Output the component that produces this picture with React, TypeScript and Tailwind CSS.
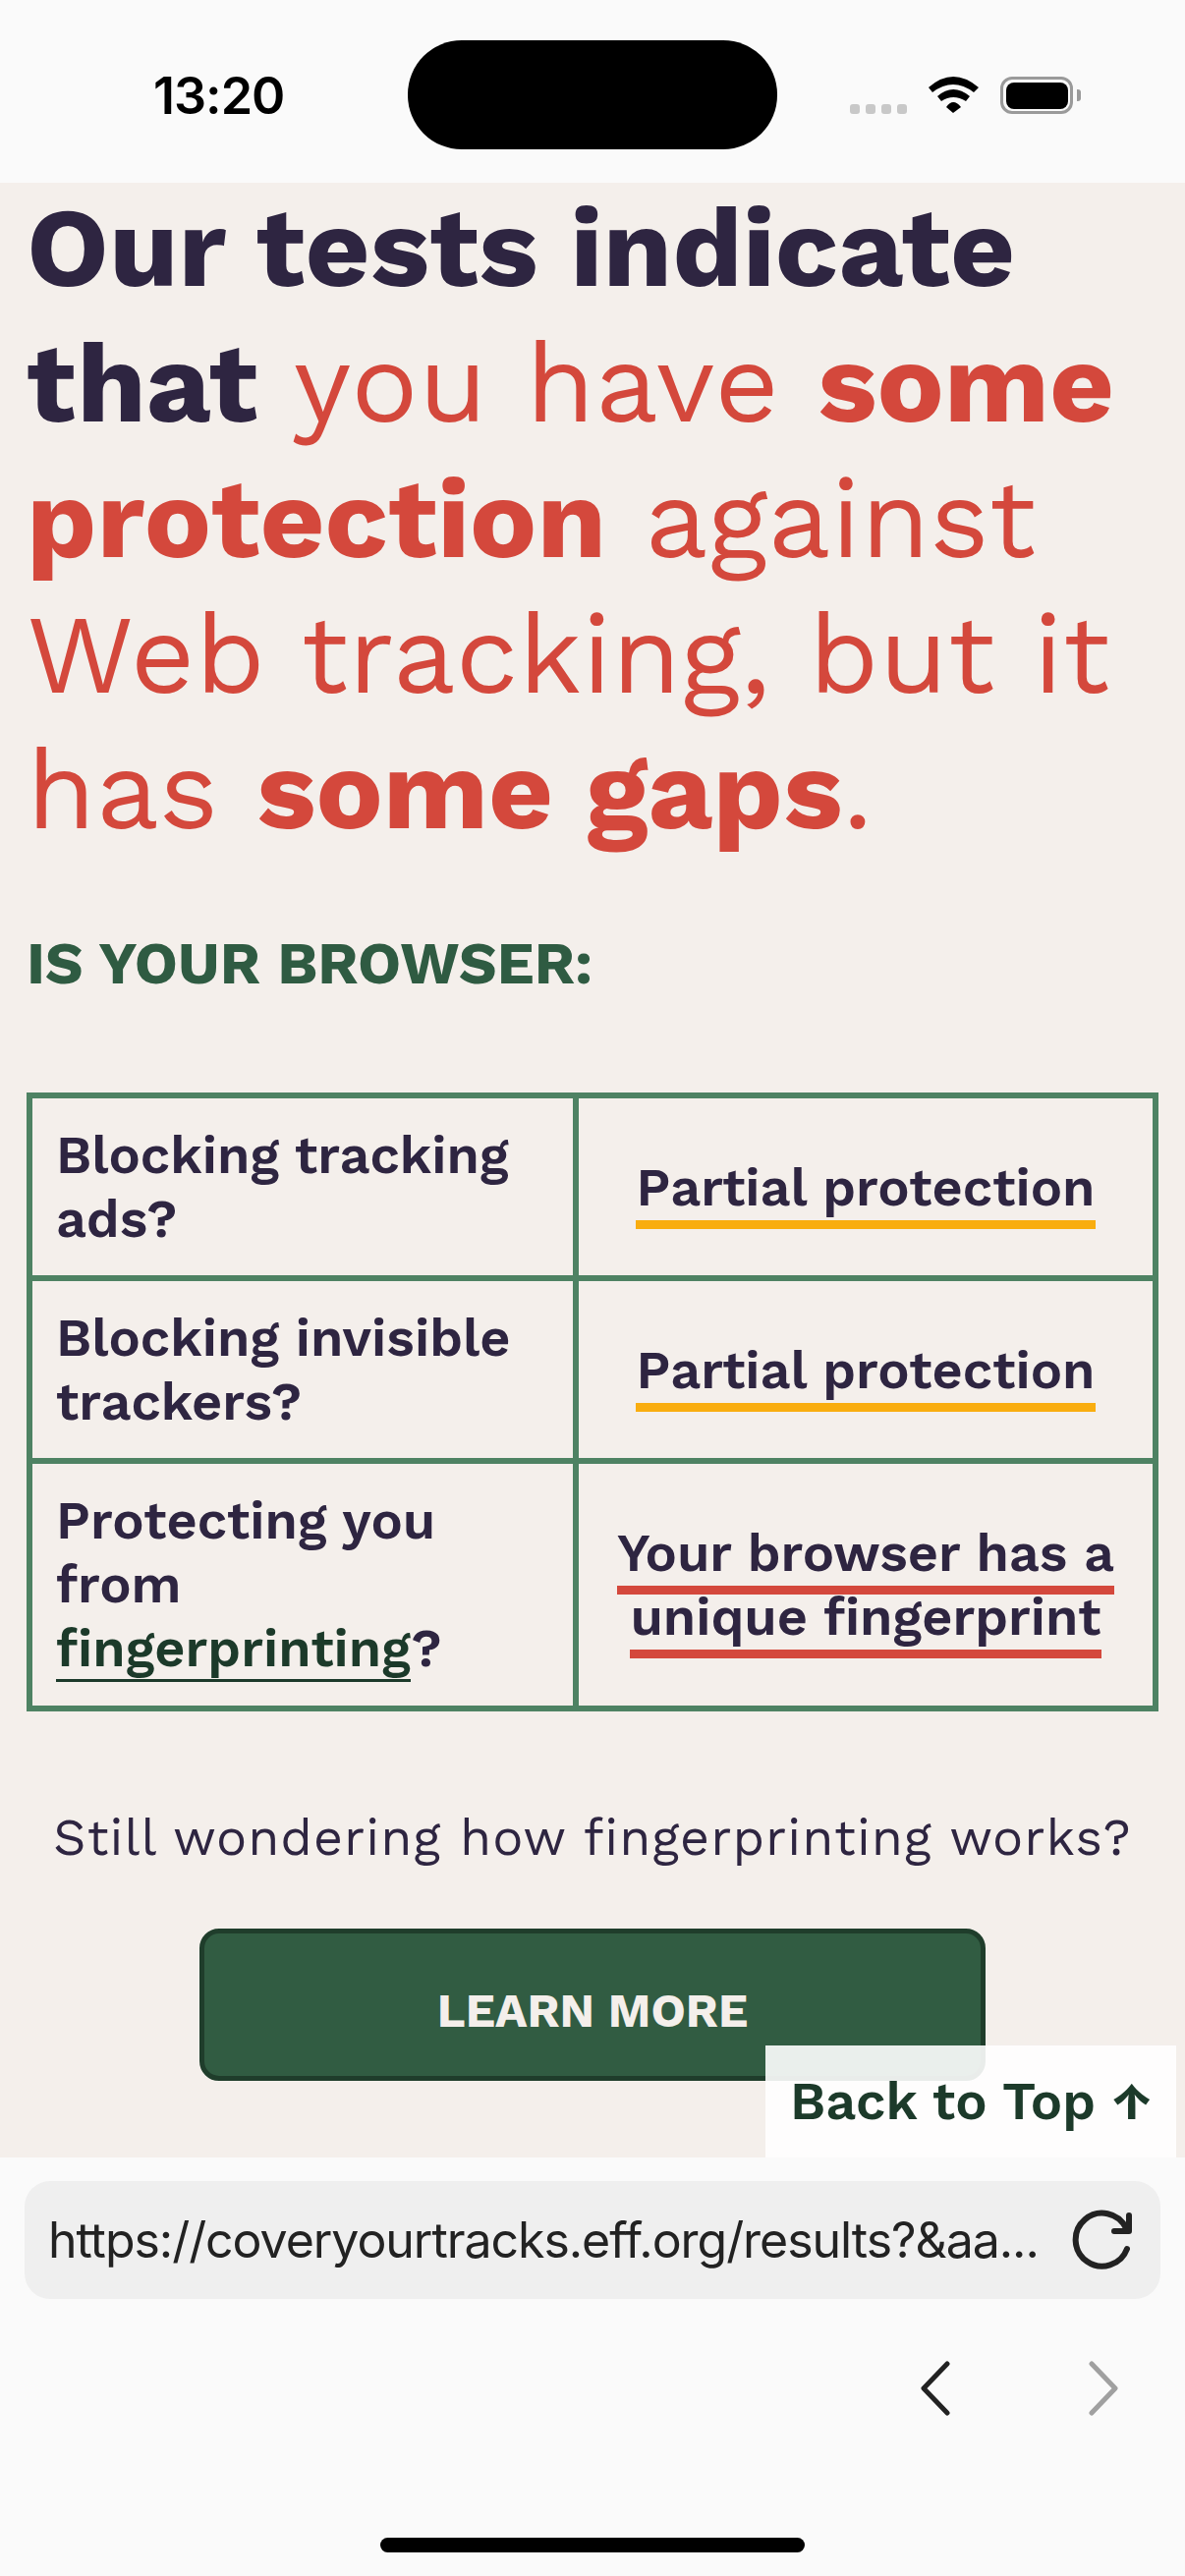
import { ReactNode } from 'react';

const UI_FONT = 'font-["Work_Sans","Inter","Liberation_Sans",sans-serif]';

function Underlined({ color, children }: { color: string; children: ReactNode }) {
  return <span className={`border-b-[9px] pb-[2px] ${color}`}>{children}</span>;
}

function StatusBar() {
  return (
    <div className="relative flex h-[186px] items-center bg-[#fafafa]">
      <span className="absolute left-[156px] top-[68px] font-['Inter',sans-serif] text-[52px] leading-[60px] font-semibold tracking-[-1px] text-black">
        13:20
      </span>
      <div className="absolute left-[415px] top-[41px] h-[111px] w-[376px] rounded-[55px] bg-black" />
      {/* signal dots */}
      <div className="absolute left-[865px] top-[106px] flex gap-[6px]">
        <span className="h-[10px] w-[10px] rounded-[3px] bg-[#c8c8c8]" />
        <span className="h-[10px] w-[10px] rounded-[3px] bg-[#c8c8c8]" />
        <span className="h-[10px] w-[10px] rounded-[3px] bg-[#c8c8c8]" />
        <span className="h-[10px] w-[10px] rounded-[3px] bg-[#c8c8c8]" />
      </div>
      <svg className="absolute left-[945px] top-[78px]" width="52" height="38" viewBox="0 0 52 38" fill="#000">
        <path d="M0 11Q25 -11 51 11L46 16Q25 0 4 16Z" />
        <path d="M9 20Q25 6 42 20L38 25Q25 17 13 25Z" />
        <path d="M18 31Q25 21 33 31L25 37Z" />
      </svg>
      <div className="absolute left-[1018px] top-[78px] flex h-[38px] w-[74px] items-center justify-center rounded-[12px] border-[3px] border-[#9a9a9a]">
        <div className="h-[27px] w-[63px] rounded-[8px] bg-black" />
      </div>
      <div className="absolute left-[1096px] top-[91px] h-[12px] w-[4px] rounded-r-[3px] bg-[#9a9a9a]" />
    </div>
  );
}

function ResultsTable() {
  const cell = 'border-[6px] border-[#4e8263] align-middle';
  const left = `${cell} w-[556px] px-[24px] py-[25px] text-left`;
  const right = `${cell} px-[14px] py-[25px] text-center`;
  return (
    <table className="mx-[27px] w-[1152px] table-fixed border-collapse text-[54px] leading-[65px] font-semibold text-[#2e2541]">
      <tbody>
        <tr>
          <td className={left}>Blocking tracking ads?</td>
          <td className={right}>
            <Underlined color="border-[#f9ad0f]">Partial protection</Underlined>
          </td>
        </tr>
        <tr>
          <td className={left}>Blocking invisible trackers?</td>
          <td className={right}>
            <Underlined color="border-[#f9ad0f]">Partial protection</Underlined>
          </td>
        </tr>
        <tr>
          <td className={`${left} pb-[26px]`}>
            Protecting you from{' '}
            <span className="border-b-[3px] border-[#1c3a2a] text-[#1c3a2a]">fingerprinting</span>?
          </td>
          <td className={right}>
            <Underlined color="border-[#d4483c]">Your browser has a unique fingerprint</Underlined>
          </td>
        </tr>
      </tbody>
    </table>
  );
}

function Toolbar() {
  return (
    <div className="relative h-[426px] bg-[#fafafa] px-[25px] pt-[24px]">
      <div className="flex h-[120px] items-center justify-between rounded-[26px] bg-[#efefef] pr-[27px] pl-[24px]">
        <span className="font-['Inter',sans-serif] text-[50px] leading-[60px] tracking-[-1.05px] whitespace-nowrap text-[#222222]">
          https://coveryourtracks.eff.org/results?&amp;aa...
        </span>
        <svg width="64" height="64" viewBox="0 0 64 64" fill="none" stroke="#222222" strokeWidth="6" strokeLinecap="round" strokeLinejoin="round">
          <path d="M57 41A27 27 0 1 1 56 20" />
          <path d="M59 7V23H44" />
        </svg>
      </div>
      <div className="mt-[63px] flex justify-end gap-[137px] pr-[41px]">
        <svg width="34" height="56" viewBox="0 0 34 56" fill="none" stroke="#222222" strokeWidth="5" strokeLinecap="round" strokeLinejoin="round">
          <path d="M29 3L5 28L29 53" />
        </svg>
        <svg width="34" height="56" viewBox="0 0 34 56" fill="none" stroke="#a0a0a0" strokeWidth="5" strokeLinecap="round" strokeLinejoin="round">
          <path d="M5 3L29 28L5 53" />
        </svg>
      </div>
      <div className="absolute top-[387px] left-[387px] h-[15px] w-[432px] rounded-full bg-black" />
    </div>
  );
}

export default function App() {
  return (
    <div className={`h-[2622px] w-[1206px] overflow-hidden bg-[#fafafa] ${UI_FONT}`}>
      <StatusBar />
      <main className="relative h-[2010px] overflow-hidden bg-[#f4efeb]">
        <h1 className="-mt-[3px] px-[27px] text-[114px] leading-[138px] font-normal text-[#d4483c]">
          <strong className="font-bold text-[#2e2541]">Our tests indicate that</strong> you have{' '}
          <strong className="font-bold">some protection</strong> against Web tracking, but it has{' '}
          <strong className="font-bold">some gaps</strong>.
        </h1>
        <h2 className="mt-[73px] px-[27px] text-[60px] leading-[70px] font-bold text-[#2f5b42]">IS YOUR BROWSER:</h2>
        <div className="mt-[96px]">
          <ResultsTable />
        </div>
        <p className="mt-[94px] text-center text-[52px] leading-[70px] tracking-[1.05px] text-[#2e2541]">
          Still wondering how fingerprinting works?
        </p>
        <button className="mx-auto mt-[57px] flex h-[155px] w-[800px] items-center justify-center rounded-[20px] border-[5px] border-[#1f3d2b] bg-[#315c42] pt-[12px] text-[48px] font-bold text-[#f4efeb]">
          LEARN MORE
        </button>
        <div className="absolute top-[1896px] left-[779px] flex h-[114px] w-[418px] items-center justify-center bg-white/90 pb-[2px] text-[54px] font-semibold text-[#1c3a2a]">
          Back to Top ↑
        </div>
      </main>
      <Toolbar />
    </div>
  );
}
